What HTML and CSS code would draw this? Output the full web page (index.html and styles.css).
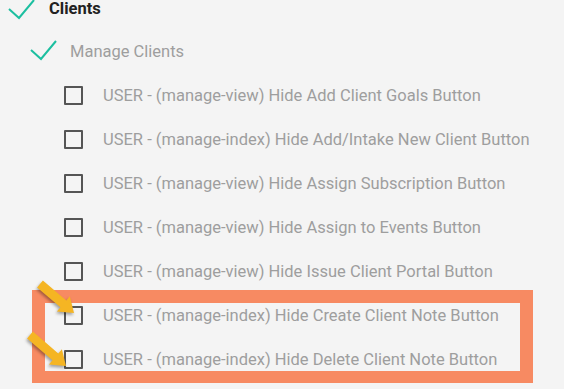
FILE: index.html
```html
<!DOCTYPE html>
<html>
	<head>
		<meta charset="UTF-8" />
		<title>Permissions - Clients</title>
		<link rel="stylesheet" href="styles.css">
	</head>

	<body>
		<div class="page">
			<div class="tree">
				<div class="row row-top">
					<svg class="check check-top" width="27" height="21" viewBox="0 0 27 21">
						<polyline points="1,10 11,19 26,1" />
					</svg>
					<span class="label-top">Clients</span>
				</div>

				<div class="row row-sub">
					<svg class="check check-sub" width="27" height="21" viewBox="0 0 27 21">
						<polyline points="1,10 11,19 26,1" />
					</svg>
					<span class="label-sub">Manage Clients</span>
				</div>

				<label class="row perm"><span class="box"></span><span class="label">USER - (manage-view) Hide Add Client Goals Button</span></label>
				<label class="row perm"><span class="box"></span><span class="label">USER - (manage-index) Hide Add/Intake New Client Button</span></label>
				<label class="row perm"><span class="box"></span><span class="label">USER - (manage-view) Hide Assign Subscription Button</span></label>
				<label class="row perm"><span class="box"></span><span class="label">USER - (manage-view) Hide Assign to Events Button</span></label>
				<label class="row perm"><span class="box"></span><span class="label">USER - (manage-view) Hide Issue Client Portal Button</span></label>

				<div class="marked">
					<label class="row perm"><span class="box"></span><span class="label">USER - (manage-index) Hide Create Client Note Button</span></label>
					<label class="row perm"><span class="box"></span><span class="label">USER - (manage-index) Hide Delete Client Note Button</span></label>
				</div>
			</div>

			<!-- annotation arrows pointing at the two checkboxes -->
			<svg class="arrows" width="564" height="389" viewBox="0 0 564 389">
				<polygon points="42.9,280.6 66.3,300.5 69.8,296.3 74,313 56.9,311.5 60.4,307.3 37.1,287.4" />
				<polygon points="32.9,331.6 58.3,353.5 61.9,349.3 66,366 48.9,364.4 52.5,360.3 27.1,338.4" />
			</svg>
		</div>
	</body>
</html>
```

FILE: styles.css
```css
* {
	box-sizing: border-box;
	font-family: Roboto, "Liberation Sans", Arial, sans-serif;
}

html,
body {
	margin: 0;
	background-color: #f4f4f4;
}

.page {
	position: relative;
	width: 564px;
	height: 389px;
	overflow: hidden;
}

.tree {
	display: flex;
	flex-direction: column;
	margin-top: -13px;
}

.row {
	display: flex;
	align-items: center;
	height: 44px;
}

.row-top {
	height: 43px;
	padding-left: 8px;
}

.row-sub {
	height: 43px;
	padding-left: 30px;
}

.check {
	flex: none;
	fill: none;
	stroke: #1cbfa0;
	stroke-width: 2;
}

.check-top {
	margin-right: 14px;
	margin-top: 2px;
}

.check-sub {
	margin-right: 13px;
	margin-top: -2px;
}

.label-top {
	font-size: 16.5px;
	font-weight: 700;
	color: #222;
}

.label-sub {
	font-size: 16.5px;
	color: #9e9e9e;
}

.perm {
	padding-left: 64px;
}

.box {
	flex: none;
	width: 19px;
	height: 19px;
	border: 2px solid #555;
	border-radius: 1px;
	margin-right: 20px;
}

.label {
	font-size: 16.5px;
	color: #9e9e9e;
	white-space: nowrap;
}

.marked {
	position: relative;
}

.marked::before {
	content: "";
	position: absolute;
	top: -3px;
	bottom: -2px;
	left: 32px;
	right: 31px;
	border: 13px solid #f78a62;
	border-bottom-width: 12px;
}

.arrows {
	position: absolute;
	top: 0;
	left: 0;
	pointer-events: none;
	fill: #f5b523;
	filter: drop-shadow(-1px 2px 1.5px rgba(0, 0, 0, 0.35));
}
```
